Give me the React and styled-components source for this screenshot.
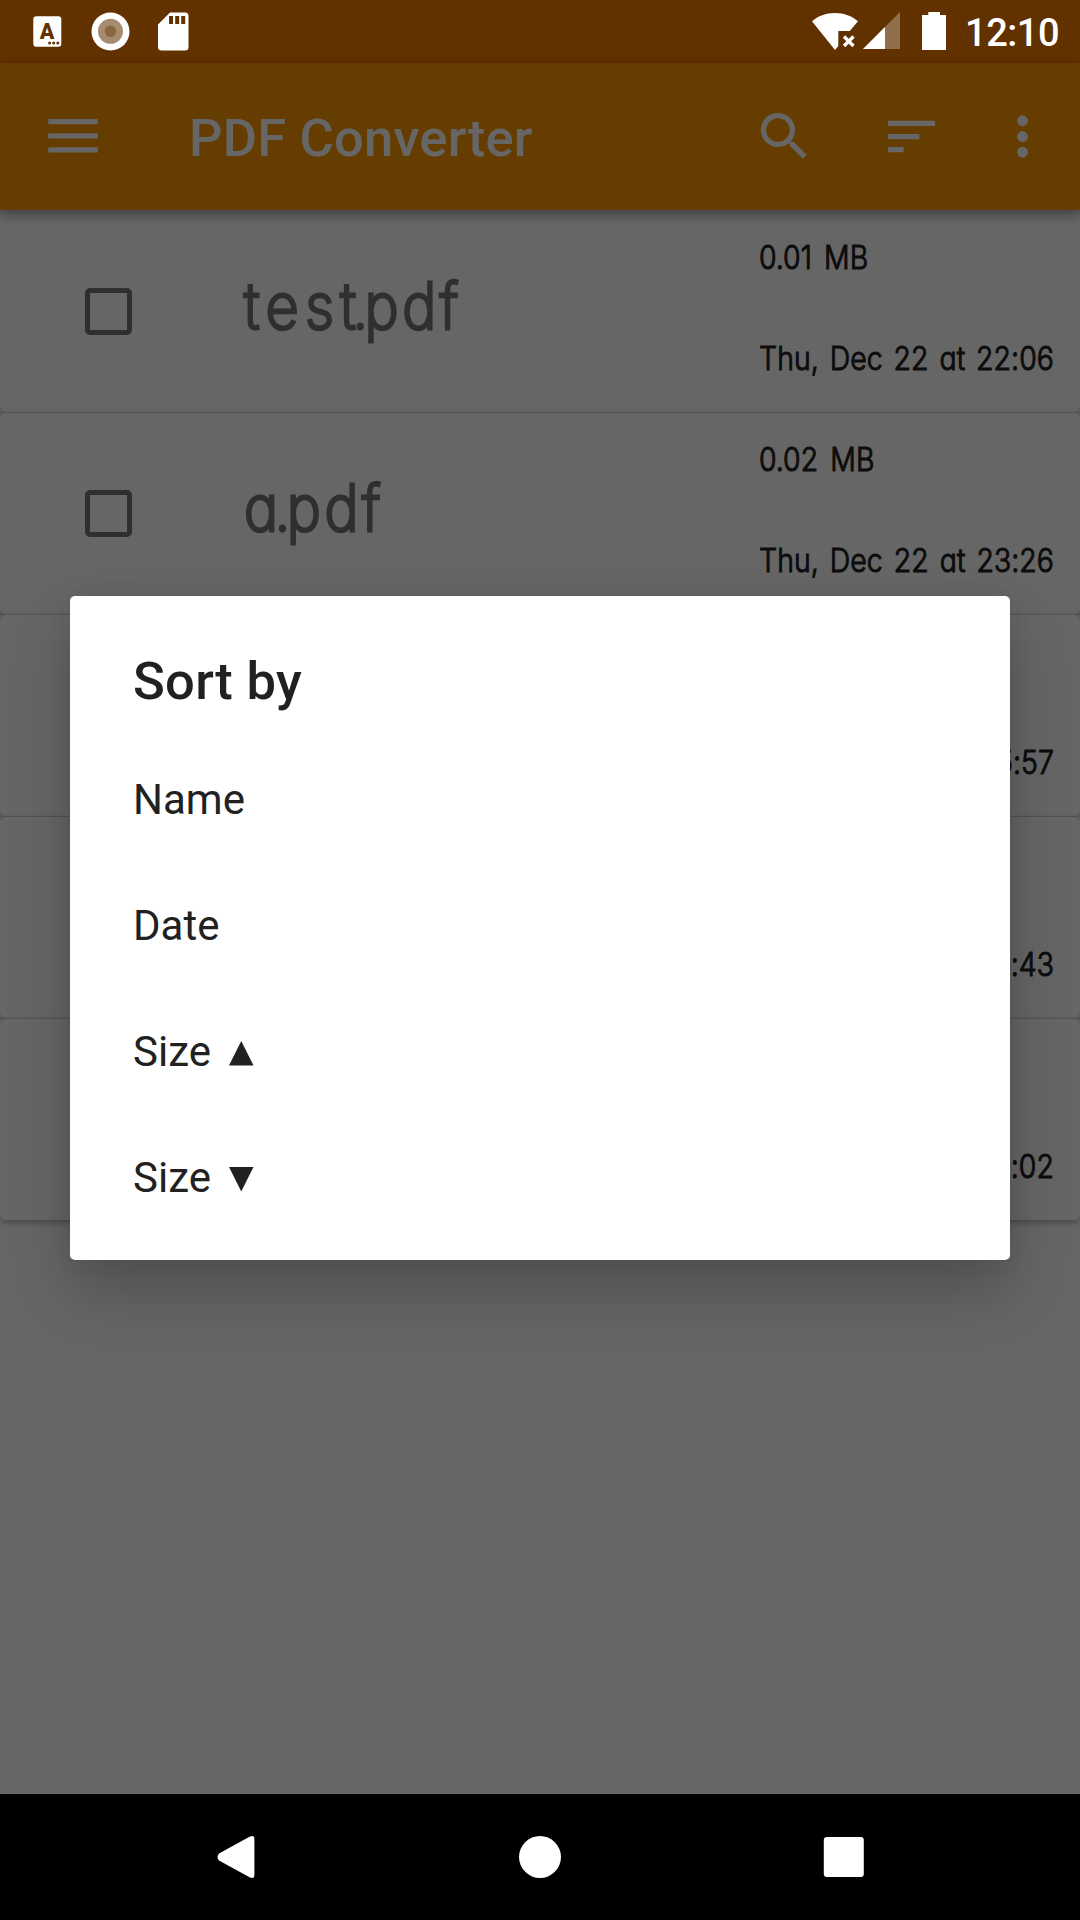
import React from "react";
import styled, { createGlobalStyle } from "styled-components";

const GlobalStyle = createGlobalStyle`
  * { box-sizing: border-box; }
  body { margin: 0; background: #000; font-family: Roboto, "Liberation Sans", sans-serif; }
  svg { display: block; flex: none; }
`;

const Screen = styled.div`
  position: relative;
  display: flex;
  flex-direction: column;
  width: 1080px;
  height: 1920px;
  overflow: hidden;
  background: #fff;
`;

const StatusBar = styled.header`
  height: 63px;
  flex: none;
  background: #f57c00;
`;

const StatusContent = styled.div`
  position: relative;
  z-index: 6;
  display: flex;
  justify-content: space-between;
  height: 63px;
  padding: 0 21px 0 30px;
`;

const StatusGroup = styled.div`
  display: flex;
  height: 63px;
`;

const Clock = styled.span`
  margin-left: 15px;
  color: #fff;
  font-size: 38px;
  font-weight: 500;
  line-height: 66px;
  letter-spacing: -0.5px;
`;

const Toolbar = styled.div`
  position: relative;
  z-index: 2;
  display: flex;
  align-items: center;
  flex: none;
  height: 147px;
  padding: 0 26px 0 42px;
  color: #fff;
  background: #ff9800;
  box-shadow: 0 4px 12px rgba(0, 0, 0, 0.4);
`;

const AppTitle = styled.h1`
  flex: 1;
  margin: 0 0 0 84px;
  font-size: 52.5px;
  font-weight: 500;
  line-height: 62px;
  letter-spacing: 0.2px;
  padding-top: 3px;
`;

const Actions = styled.div`
  display: flex;
  align-items: center;
`;

const Action = styled.div`
  margin-left: ${(p) => p.$gap}px;
`;

const FileList = styled.main`
  flex: 1;
  background: #fff;
`;

const FileCard = styled.article`
  display: flex;
  height: 202px;
  padding-left: 76px;
  border-radius: 6px;
  background: #fff;
  border-top: 1px solid ${(p) => (p.$first ? "#fff" : "#cfcfcf")};
  box-shadow: 0 3px 6px rgba(0, 0, 0, 0.28);
`;

const Check = styled.span`
  width: 47px;
  height: 47px;
  margin: 77px 0 0 8.5px;
  flex: none;
  border: 5px solid rgba(0, 0, 0, 0.54);
  border-radius: 5px;
`;

const handFont = `"Coming Soon", Inter, "Noto Sans", sans-serif`;

const FileName = styled.h2`
  width: 515px;
  margin: 53px 0 0 112.5px;
  flex: none;
  color: #757575;
  font-family: ${handFont};
  font-size: 64px;
  font-weight: 200;
  line-height: 84px;
  font-feature-settings: "cv11", "ss03";
  -webkit-text-stroke: 3.2px #757575;
  stroke-linejoin: round;
  transform: scaleX(0.9);
  transform-origin: 0 50%;
`;

const Stem = styled.span`
  letter-spacing: ${(p) => p.$tracking}px;
`;

const Tight = styled.span`
  letter-spacing: -4px;
`;

const Extension = styled.span`
  letter-spacing: 4px;
`;

const Meta = styled.div`
  width: 321px;
  flex: none;
  display: flex;
  flex-direction: column;
  align-items: flex-start;
  padding-top: 26px;
  gap: 61px;
`;

const MetaText = styled.span`
  color: #212121;
  font-family: ${handFont};
  font-size: 33px;
  font-weight: 300;
  line-height: 40px;
  white-space: nowrap;
  word-spacing: 5px;
  font-feature-settings: "cv11";
  -webkit-text-stroke: 1.1px #212121;
  transform: scaleX(0.86);
  transform-origin: 0 50%;
`;

const DateText = styled(MetaText)`
  width: 343px;
  white-space: normal;
  word-spacing: 0;
  letter-spacing: 0.1px;
  text-align: justify;
  text-align-last: justify;
`;

const Scrim = styled.div`
  position: absolute;
  inset: 0;
  z-index: 5;
  display: flex;
  align-items: flex-start;
  justify-content: center;
  padding-top: 596px;
  background: rgba(0, 0, 0, 0.6);
`;

const Dialog = styled.section`
  width: 940px;
  height: 664px;
  padding: 51px 63px 0;
  border-radius: 5px;
  background: #fff;
  color: #212121;
  box-shadow: 0 32px 62px rgba(0, 0, 0, 0.22), 0 0 24px rgba(0, 0, 0, 0.06);
`;

const DialogTitle = styled.h2`
  margin: 0;
  font-size: 52.5px;
  font-weight: 500;
  line-height: 68px;
  letter-spacing: 0.3px;
`;

const Options = styled.ul`
  margin: 21px 0 0;
  padding: 0;
  list-style: none;
`;

const Option = styled.li`
  display: flex;
  align-items: center;
  height: 126px;
  font-size: 42px;
`;

const Arrow = styled.svg`
  margin: 5px 0 0 18.5px;
`;

const NavBar = styled.nav`
  position: relative;
  z-index: 6;
  display: flex;
  align-items: center;
  justify-content: space-between;
  flex: none;
  height: 126px;
  padding: 0 215px 0 215px;
  background: #000;
`;

const files = [
  { stem: "test", ext: "pdf", tracking: 7, size: "0.01 MB", date: "Thu, Dec 22 at 22:06" },
  { stem: "a", ext: "pdf", tracking: 1, size: "0.02 MB", date: "Thu, Dec 22 at 23:26" },
  { date: "Thu, Dec 22 at 15:57" },
  { date: "Thu, Dec 22 at 21:43" },
  { date: "Thu, Dec 22 at 20:02" },
];

const options = [
  { label: "Name" },
  { label: "Date" },
  { label: "Size", arrow: "0,24.5 12.25,0 24.5,24.5" },
  { label: "Size", arrow: "0,0 24.5,0 12.25,24.5" },
];

function Notifications() {
  return (
    <svg width="160" height="63" viewBox="30 0 160 63" fill="#fff">
      <rect x="33.3" y="16.2" width="28" height="30.6" rx="3" />
      <text x="47.2" y="38.5" textAnchor="middle" fontFamily="Roboto" fontWeight="900" fontSize="21.5" fill="#623200">A</text>
      <circle cx="49.6" cy="43" r="1.5" fill="#623200" />
      <circle cx="53.7" cy="43" r="1.5" fill="#623200" />
      <circle cx="57.8" cy="43" r="1.5" fill="#623200" />
      <circle cx="110.5" cy="31.5" r="19" />
      <circle cx="110.5" cy="31.3" r="12.5" fill="#a58c71" />
      <circle cx="110.5" cy="31.3" r="5.7" fill="#8b673e" />
      <path d="M170 12.5h15a3.5 3.5 0 0 1 3.5 3.5v31a3.5 3.5 0 0 1-3.5 3.5h-23.500a3.500 3.500 0 0 1-3.500-3.500V24.500z" />
      <path d="M169 16h4v8h-4zM175.200 16h4v8h-4zM181.200 16h4v8h-4z" fill="#623200" />
    </svg>
  );
}

function Connectivity() {
  return (
    <svg width="140" height="63" viewBox="810 0 140 63" fill="#fff">
      <path d="M812 21.300C818 16 826 13 835 13s17 3 23 8.300L849.800 31h-11.500v15L835 50z" />
      <path d="M844 36.500l9.500 9.500M853.500 36.500L844 46" stroke="#fff" strokeWidth="3.400" />
      <path d="M863 49l37-37v37z" opacity="0.3" />
      <path d="M863 49l22-22v22z" />
      <path d="M922 15h6.300v-3h11.700v3h6v35h-24z" />
    </svg>
  );
}

export default function App() {
  return (
    <Screen>
      <GlobalStyle />
      <StatusBar>
        <StatusContent>
          <StatusGroup>
            <Notifications />
          </StatusGroup>
          <StatusGroup>
            <Connectivity />
            <Clock>12:10</Clock>
          </StatusGroup>
        </StatusContent>
      </StatusBar>
      <Toolbar>
        <svg width="63" height="63" viewBox="0 0 63 63" fill="currentColor">
          <path d="M6.300 14h49.500v5.300H6.300zM6.300 28.200h49.500v5.300H6.300zM6.300 42.300h49.500v5.300H6.300z" />
        </svg>
        <AppTitle>PDF Converter</AppTitle>
        <Actions>
          <svg width="63" height="63" viewBox="0 0 24 24" fill="currentColor">
            <path d="M15.500 14h-.79l-.28-.27A6.471 6.471 0 0 0 16 9.500 6.500 6.500 0 1 0 9.500 16c1.610 0 3.090-.59 4.230-1.570l.27.28v.79l5 4.990L20.490 19l-4.990-5zm-6 0C7.010 14 5 11.990 5 9.500S7.010 5 9.500 5 14 7.010 14 9.500 11.990 14 9.500 14z" />
          </svg>
          <Action $gap={64}>
            <svg width="63" height="63" viewBox="0 0 24 24" fill="currentColor">
              <path d="M3 18h6v-2H3v2zM3 6v2h18V6H3zm0 7h12v-2H3v2z" />
            </svg>
          </Action>
          <Action $gap={48}>
            <svg width="63" height="63" viewBox="0 0 24 24" fill="currentColor">
              <circle cx="12" cy="6" r="2.050" />
              <circle cx="12" cy="12" r="2.050" />
              <circle cx="12" cy="18" r="2.050" />
            </svg>
          </Action>
        </Actions>
      </Toolbar>
      <FileList>
        {files.map((file, i) => (
          <FileCard key={file.date} $first={i === 0}>
            <Check />
            <FileName>
              {file.stem && (
                <>
                  <Stem $tracking={file.tracking}>{file.stem.slice(0, -1)}</Stem>
                  <Tight>{file.stem.slice(-1) + "."}</Tight>
                  <Extension>{file.ext}</Extension>
                </>
              )}
            </FileName>
            <Meta>
              <MetaText>{file.size || "\u00a0"}</MetaText>
              <DateText>{file.date}</DateText>
            </Meta>
          </FileCard>
        ))}
      </FileList>
      <NavBar>
        <svg width="42" height="44" viewBox="0 0 42 44" fill="#fff">
          <path d="M4 18.500L35 1.500Q39.400 0 39.400 4V40Q39.400 44 35 42.500L4 25.500Q1 22 4 18.500z" />
        </svg>
        <svg width="42" height="42" viewBox="0 0 42 42" fill="#fff">
          <circle cx="21" cy="21" r="21" />
        </svg>
        <svg width="42" height="42" viewBox="0 0 42 42" fill="#fff">
          <rect x="0.800" y="1" width="40" height="40" rx="3" />
        </svg>
      </NavBar>
      <Scrim>
        <Dialog>
          <DialogTitle>Sort by</DialogTitle>
          <Options>
            {options.map((option, i) => (
              <Option key={i}>
                {option.label}
                {option.arrow && (
                  <Arrow width="24.500" height="24.500" viewBox="0 0 24.5 24.5" fill="#212121">
                    <polygon points={option.arrow} />
                  </Arrow>
                )}
              </Option>
            ))}
          </Options>
        </Dialog>
      </Scrim>
    </Screen>
  );
}
